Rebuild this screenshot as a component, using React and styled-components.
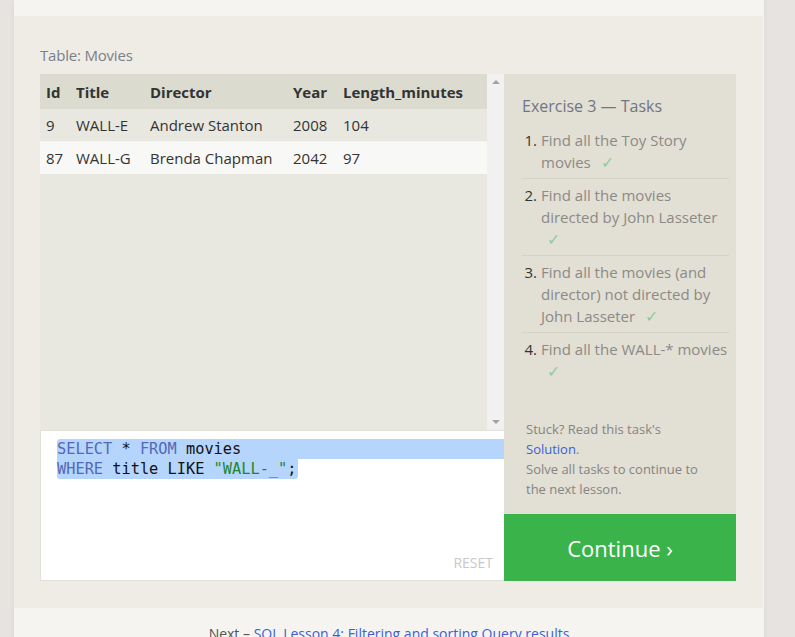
import React from 'react'
import styled, { createGlobalStyle } from 'styled-components';

const GlobalStyle = createGlobalStyle`
  html, body {
    margin: 0;
    padding: 0;
    background: #e6e3e0;
    font-family: "Open Sans", "Noto Sans", sans-serif;
    overflow: hidden;
  }
`

const movies = [
  { id: 9, title: 'WALL-E', director: 'Andrew Stanton', year: 2008, length: 104 },
  { id: 87, title: 'WALL-G', director: 'Brenda Chapman', year: 2042, length: 97 },
]

const tasks = [
  'Find all the Toy Story movies',
  'Find all the movies directed by John Lasseter',
  'Find all the movies (and director) not directed by John Lasseter',
  'Find all the WALL-* movies',
]

export default function App() {
  return (
    <>
      <GlobalStyle />
      <Page>
        <TopStrip />
        <Exercise>
          <TableLabel>Table: Movies</TableLabel>
          <Workspace>
            <LeftColumn>
              <ResultsBox>
                <ResultsArea>
                  <Results>
                    <thead>
                      <tr>
                        <Th>Id</Th>
                        <Th>Title</Th>
                        <Th>Director</Th>
                        <Th>Year</Th>
                        <Th>Length_minutes</Th>
                      </tr>
                    </thead>
                    <tbody>
                      {movies.map((m, i) => (
                        <Row key={m.id} $alt={i % 2 === 1}>
                          <Td>{m.id}</Td>
                          <Td>{m.title}</Td>
                          <Td>{m.director}</Td>
                          <Td>{m.year}</Td>
                          <Td>{m.length}</Td>
                        </Row>
                      ))}
                    </tbody>
                  </Results>
                </ResultsArea>
                <Scrollbar>
                  <Arrow $up />
                  <Arrow />
                </Scrollbar>
              </ResultsBox>

              <Editor>
                <Code>
                  <LineFull>
                    <Kw>SELECT</Kw> * <Kw>FROM</Kw> movies
                  </LineFull>
                  <LineSel>
                    <Kw>WHERE</Kw> title LIKE <Str>"WALL-_"</Str>;
                  </LineSel>
                </Code>
                <Reset>RESET</Reset>
              </Editor>
            </LeftColumn>

            <RightColumn>
              <Tasks>
                <TasksTitle>Exercise 3 — Tasks</TasksTitle>
                <TaskList>
                  {tasks.map((t, i) => (
                    <Task key={i} $last={i === tasks.length - 1}>
                      <TaskNum>{i + 1}.</TaskNum>
                      <TaskText>
                        {t} <Check>✓</Check>
                      </TaskText>
                    </Task>
                  ))}
                </TaskList>
                <Stuck>
                  Stuck? Read this task's<br />
                  <LinkText>Solution</LinkText>.<br />
                  Solve all tasks to continue to the next lesson.
                </Stuck>
              </Tasks>
              <ContinueButton>Continue ›</ContinueButton>
            </RightColumn>
          </Workspace>
        </Exercise>
        <Footer>
          Next – <LinkText>SQL Lesson 4: Filtering and sorting Query results</LinkText>
        </Footer>
      </Page>
    </>
  )
}

const Page = styled.div`
  width: 750px;
  margin-left: 14px;
  min-height: 637px;
  background: #f5f4f0;
  box-shadow: 0 0 6px rgba(0, 0, 0, 0.06);
`

const TopStrip = styled.div`
  height: 16px;
`

// ===========> EXERCISE PANEL <=============== //

const Exercise = styled.div`
  background: #efece5;
  padding: 28px 27px 27px 26px;
  margin-right: 1px;
`

const TableLabel = styled.div`
  font-size: 15px;
  line-height: 20px;
  color: #7a808a;
  margin: 1px 0 9px;
  letter-spacing: -0.2px;
`

const Workspace = styled.div`
  display: grid;
  grid-template-columns: 464px 232px;
`

const LeftColumn = styled.div`
  display: flex;
  flex-direction: column;
`

const RightColumn = styled.div`
  display: flex;
  flex-direction: column;
`

// =====================> TABLE <============================= //

const ResultsBox = styled.div`
  height: 356px;
  display: flex;
`

const ResultsArea = styled.div`
  flex: 1;
  background: #e9e8e0;
`

const Results = styled.table`
  width: 100%;
  border-collapse: collapse;
  font-size: 15px;
  color: #333;
`

const Th = styled.th`
  text-align: left;
  font-weight: 700;
  height: 34px;
  padding: 1px 0 0 6px;
  background: #dcdbd0;
  white-space: nowrap;

  &:nth-child(1) { width: 24px; }
  &:nth-child(2) { width: 68px; }
  &:nth-child(3) { width: 137px; }
  &:nth-child(4) { width: 44px; }
`

const Row = styled.tr`
  background: ${p => (p.$alt ? '#f8f8f6' : '#e9e8e0')};
  border-top: ${p => (p.$alt ? '1px solid #f4f4f1' : 'none')};
`

const Td = styled.td`
  height: 32px;
  padding: 0 0 0 6px;
  white-space: nowrap;
`

const Scrollbar = styled.div`
  width: 17px;
  background: #f1f1f1;
  display: flex;
  flex-direction: column;
  justify-content: space-between;
  align-items: center;
  padding: 6px 0;
  box-sizing: border-box;
`

const Arrow = styled.div`
  width: 0;
  height: 0;
  border-left: 4px solid transparent;
  border-right: 4px solid transparent;
  ${p => (p.$up ? 'border-bottom: 4px solid #a3a3a3;' : 'border-top: 4px solid #a3a3a3;')}
`

// =====================> EDITOR <============================= //

const Editor = styled.div`
  height: 151px;
  box-sizing: border-box;
  background: #fff;
  border: 1px solid #e2e0d8;
  border-right: none;
  display: flex;
  flex-direction: column;
  padding: 8px 0 7px 16px;
`

const Code = styled.div`
  font-family: "DejaVu Sans Mono", "Liberation Mono", monospace;
  font-size: 15.3px;
  line-height: 20px;
  color: #111;
  flex: 1;
`

const LineFull = styled.div`
  background: #b5d5fc;
  border-top-left-radius: 3px;
`

const LineSel = styled.div`
  display: inline-block;
  background: #b5d5fc;
  border-radius: 0 0 3px 3px;
  padding-right: 2px;
`

const Kw = styled.span`
  color: #5468b8;
`

const Str = styled.span`
  color: #23862a;
`

const Reset = styled.div`
  align-self: flex-end;
  margin-right: 11px;
  font-size: 14px;
  line-height: 20px;
  color: #c9c9c9;
`

// =====================> TASKS <============================= //

const Tasks = styled.div`
  height: 440px;
  box-sizing: border-box;
  background: #e2dfd4;
  padding: 21px 7px 15px 18px;
  display: flex;
  flex-direction: column;
`

const TasksTitle = styled.div`
  font-size: 16px;
  line-height: 22px;
  color: #6f7685;
  margin-bottom: 11px;
`

const TaskList = styled.div`
  display: flex;
  flex-direction: column;
`

const Task = styled.div`
  display: flex;
  padding: 1px 0 5px;
  margin-bottom: 4px;
  border-bottom: ${p => (p.$last ? 'none' : '1px solid #d5d2c6')};
`

const TaskNum = styled.span`
  width: 19px;
  flex-shrink: 0;
  text-align: right;
  padding-right: 4px;
  box-sizing: border-box;
  font-size: 15px;
  line-height: 22px;
  color: #333;
`

const TaskText = styled.span`
  flex: 1;
  font-size: 15px;
  line-height: 22px;
  color: #8c8a87;
`

const Check = styled.span`
  display: inline-block;
  margin-left: 6px;
  color: #8fcd9b;
  font-size: 16px;
`

const Stuck = styled.div`
  margin-top: auto;
  margin-left: 4px;
  padding-right: 22px;
  font-size: 13px;
  line-height: 20px;
  color: #858483;
`

const LinkText = styled.span`
  color: #3a5fd8;
`

const ContinueButton = styled.button`
  height: 67px;
  border: none;
  background: #3ab44a;
  color: #fff;
  font-family: "Open Sans", "Noto Sans", sans-serif;
  font-size: 22px;
  cursor: pointer;
  padding: 0;
`

// =====================> FOOTER <============================= //

const Footer = styled.div`
  text-align: center;
  padding-top: 16px;
  font-size: 14px;
  line-height: 20px;
  color: #555;
`
